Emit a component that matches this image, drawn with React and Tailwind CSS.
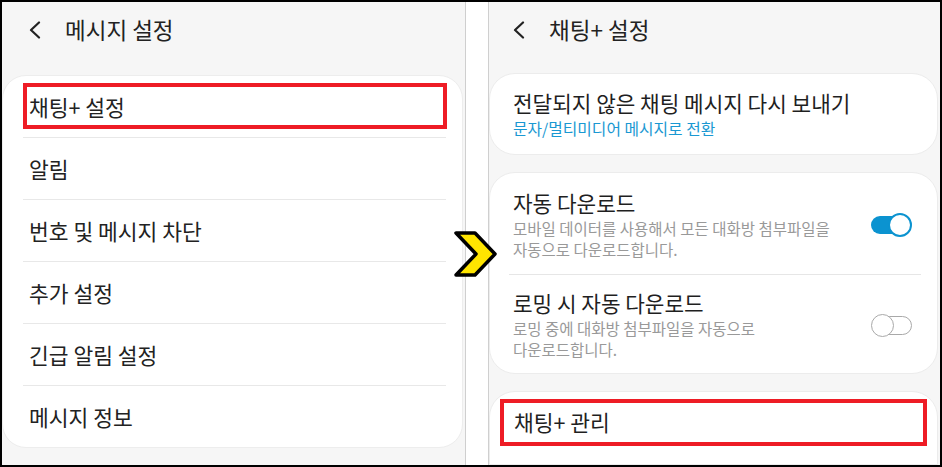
import { useState } from "react"

const BackArrow = () => (
  <svg width="14" height="18" viewBox="0 0 14 18" className="shrink-0">
    <polyline points="11,1.5 3,9 11,16.5" fill="none" stroke="#222" strokeWidth="2.2" strokeLinecap="round" strokeLinejoin="round" />
  </svg>
)

const Toggle = ({ on }) =>
  on ? (
    <div className="relative w-[41px] h-[24px] shrink-0">
      <div className="absolute left-0 right-[2px] top-[3px] h-[18px] rounded-full bg-[#0b93d0]" />
      <div className="absolute right-0 top-0 w-[24px] h-[24px] rounded-full bg-white border-2 border-[#0b93d0]" />
    </div>
  ) : (
    <div className="relative w-[41px] h-[24px] shrink-0">
      <div className="absolute left-[2px] right-0 top-[3px] h-[19px] rounded-full bg-white border-[1.5px] border-[#a9a9a9]" />
      <div className="absolute left-0 top-[1px] w-[23px] h-[23px] rounded-full bg-white border-[1.5px] border-[#a9a9a9]" />
    </div>
  )

const leftItems = ["채팅+ 설정", "알림", "번호 및 메시지 차단", "추가 설정", "긴급 알림 설정", "메시지 정보"]

const LeftPanel = () => (
  <div className="w-[464px] h-full bg-[#f6f6f6] border-r border-[#cfcfcf] flex flex-col">
    <div className="h-[56px] flex items-center pl-[26px] gap-[23px]">
      <BackArrow />
      <span className="text-[22.5px] text-[#222]">메시지 설정</span>
    </div>
    <div className="mt-[17px] mr-[2px] bg-white rounded-[24px] border border-[#ededed] flex flex-col">
      {leftItems.map((item, i) => (
        <div key={item}>
          <div className="relative h-[61px] flex items-center pl-[26px]">
            <span className="text-[21.5px] text-[#222] leading-[26px]">{item}</span>
            {i === 0 && (
              <div className="absolute left-[20px] right-[15px] top-[7px] h-[46px] border-4 border-[#ee1c25]" />
            )}
          </div>
          {i < leftItems.length - 1 && <div className="ml-[20px] mr-[16px] h-px bg-[#e8e8e8]" />}
        </div>
      ))}
    </div>
  </div>
)

const RightPanel = () => {
  const [autoDl, setAutoDl] = useState(true)
  const [roamDl, setRoamDl] = useState(false)

  return (
    <div className="flex-1 h-full bg-[#f6f6f6] border-l border-[#cfcfcf] flex flex-col overflow-hidden">
      <div className="h-[56px] flex items-center pl-[23px] gap-[23px]">
        <BackArrow />
        <span className="text-[22.5px] text-[#222]">채팅+ 설정</span>
      </div>

      {/* resend card */}
      <div className="mt-[15px] mr-[2px] bg-white rounded-[26px] border border-[#ececec] pl-[23px] pt-[16px] pb-[15px]">
        <div className="text-[21.3px] leading-[26px] text-[#1f1f1f]">전달되지 않은 채팅 메시지 다시 보내기</div>
        <div className="mt-[3px] text-[15.8px] leading-[20px] text-[#1a98d2]">문자/멀티미디어 메시지로 전환</div>
      </div>

      {/* download card */}
      <div className="mt-[17px] mr-[2px] bg-white rounded-[26px] border border-[#ececec] flex flex-col">
        <div className="flex items-center pl-[23px] pr-[25px] pt-[17px] pb-[14px] cursor-pointer" onClick={() => setAutoDl(!autoDl)}>
          <div className="flex-1">
            <div className="text-[21.3px] leading-[26px] text-[#1f1f1f]">자동 다운로드</div>
            <div className="mt-[2px] text-[15.5px] leading-[21px] text-[#999]">
              <div>모바일 데이터를 사용해서 모든 대화방 첨부파일을</div>
              <div>자동으로 다운로드합니다.</div>
            </div>
          </div>
          <Toggle on={autoDl} />
        </div>
        <div className="ml-[19px] mr-[16px] h-px bg-[#e6e6e6]" />
        <div className="flex items-center pl-[23px] pr-[25px] pt-[15px] pb-[13px] cursor-pointer" onClick={() => setRoamDl(!roamDl)}>
          <div className="flex-1">
            <div className="text-[21.3px] leading-[26px] text-[#1f1f1f]">로밍 시 자동 다운로드</div>
            <div className="mt-[2px] text-[15.5px] leading-[21px] text-[#999]">
              <div>로밍 중에 대화방 첨부파일을 자동으로</div>
              <div>다운로드합니다.</div>
            </div>
          </div>
          <Toggle on={roamDl} />
        </div>
      </div>

      {/* manage card */}
      <div className="mt-[17px] mr-[2px] bg-white rounded-t-[26px] border border-[#ececec] flex-1 px-[10px] pt-[7px]">
        <div className="h-[47px] border-4 border-[#ee1c25] flex items-center pl-[10px]">
          <span className="text-[21.5px] text-[#1f1f1f]">채팅+ 관리</span>
        </div>
      </div>
    </div>
  )
}

const Chevron = () => (
  <svg width="48" height="50" viewBox="0 0 48 50" className="absolute left-[449px] top-[227px]">
    <polygon
      points="5,4 24,4 44,25 24,46 5,46 25,25"
      fill="#ffe500"
      stroke="#000"
      strokeWidth="3.5"
      strokeLinejoin="round"
    />
  </svg>
)

export default function App() {
  return (
    <div className="relative w-[942px] h-[467px] border-2 border-black bg-white flex font-['Noto_Sans_CJK_KR',sans-serif]">
      <LeftPanel />
      <div className="w-[22px] h-full bg-white" />
      <RightPanel />
      <Chevron />
    </div>
  )
}
